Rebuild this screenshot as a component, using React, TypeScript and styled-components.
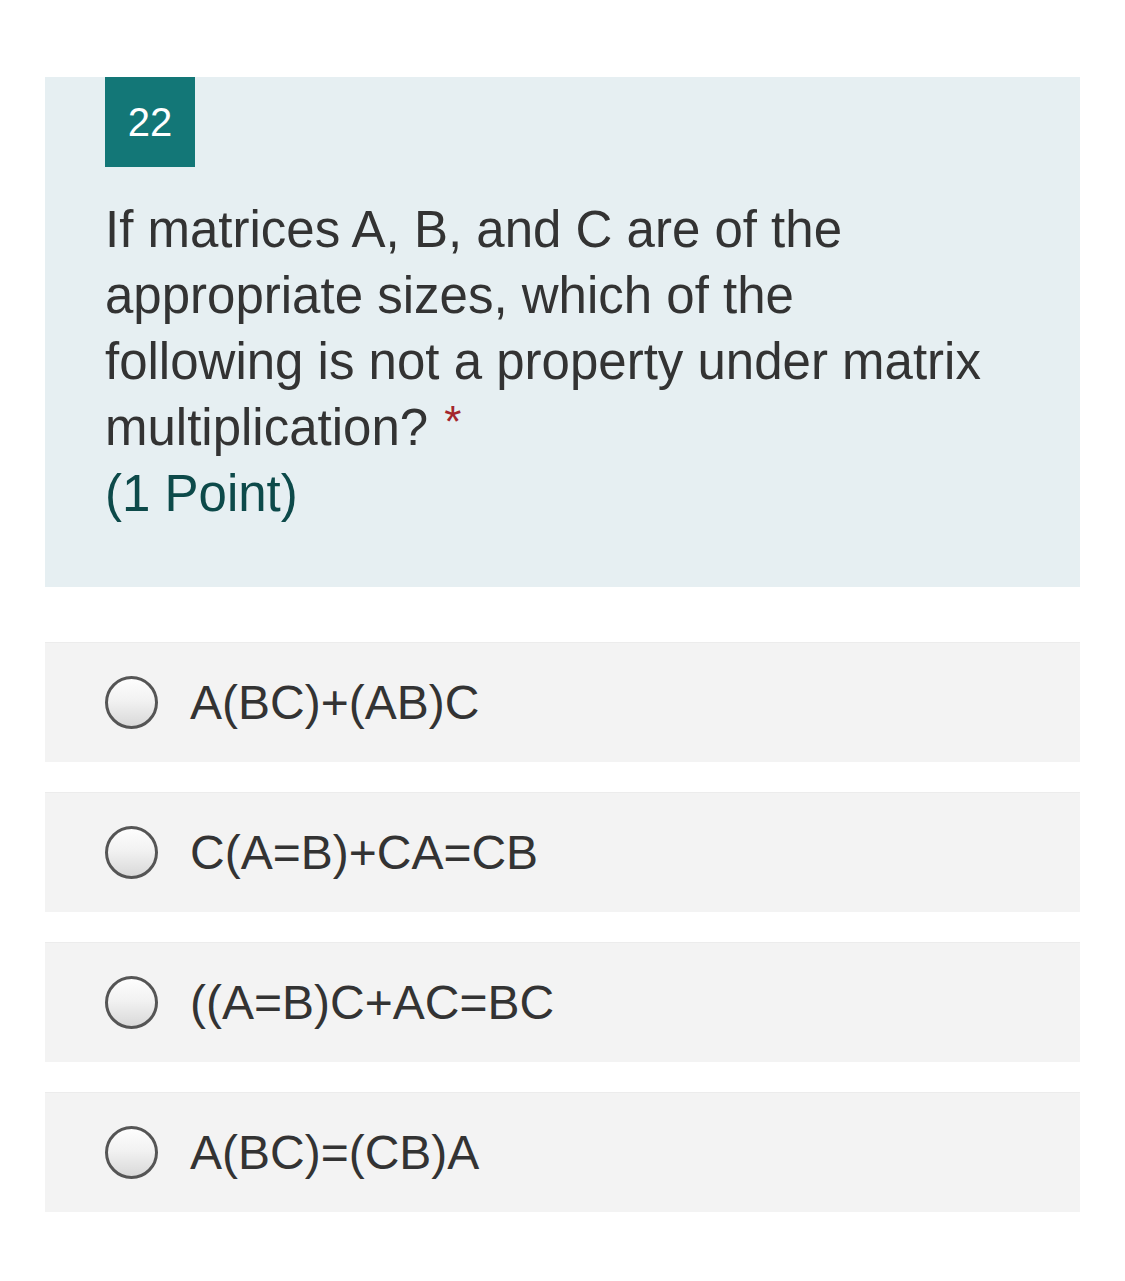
import React from "react";
import styled, { createGlobalStyle } from "styled-components";

const Global = createGlobalStyle`
  html, body { margin: 0; padding: 0; background: #ffffff; }
  body { font-family: "Liberation Sans", Arial, sans-serif; color: #333333; }
`;

const Page = styled.div`
  width: 1125px;
  min-height: 1281px;
  padding: 77px 45px 0 45px;
  box-sizing: border-box;
  display: flex;
  flex-direction: column;
`;

const Header = styled.div`
  background: #e6eff2;
  padding: 0 60px 60px 60px;
  display: flex;
  flex-direction: column;
  align-items: flex-start;
`;

const Badge = styled.div`
  width: 90px;
  height: 90px;
  background: #137777;
  color: #ffffff;
  font-size: 40px;
  display: flex;
  align-items: center;
  justify-content: center;
`;

const Question = styled.div`
  margin-top: 30px;
  font-size: 51px;
  line-height: 66px;
  color: #333333;
`;

const Star = styled.span`
  color: #a4262c;
  margin-left: 16px;
  font-size: 44px;
  line-height: 0;
  vertical-align: 8px;
`;

const Points = styled.div`
  font-size: 51px;
  line-height: 66px;
  color: #0d4a4a;
`;

const Options = styled.div`
  margin-top: 55px;
  display: flex;
  flex-direction: column;
  gap: 30px;
`;

const Option = styled.label`
  height: 120px;
  background: #f3f3f3;
  border-top: 1px solid #ececec;
  box-sizing: border-box;
  display: flex;
  align-items: center;
  padding-left: 60px;
  gap: 32px;
`;

const Radio = styled.span`
  width: 53px;
  height: 53px;
  border-radius: 50%;
  border: 3px solid #555555;
  box-sizing: border-box;
  background: linear-gradient(180deg, #fdfdfd 0%, #f2f2f2 45%, #d9d9d9 100%);
  flex: none;
`;

const OptionText = styled.span`
  font-size: 48px;
  color: #333333;
`;

const options = ["A(BC)+(AB)C", "C(A=B)+CA=CB", "((A=B)C+AC=BC", "A(BC)=(CB)A"];

export default function App() {
  return (
    <>
      <Global />
      <Page>
        <Header>
          <Badge>22</Badge>
          <Question>
            If matrices A, B, and C are of the
            <br />
            appropriate sizes, which of the
            <br />
            following is not a property under matrix
            <br />
            multiplication?<Star>*</Star>
          </Question>
          <Points>(1 Point)</Points>
        </Header>
        <Options>
          {options.map((o) => (
            <Option key={o}>
              <Radio />
              <OptionText>{o}</OptionText>
            </Option>
          ))}
        </Options>
      </Page>
    </>
  );
}
